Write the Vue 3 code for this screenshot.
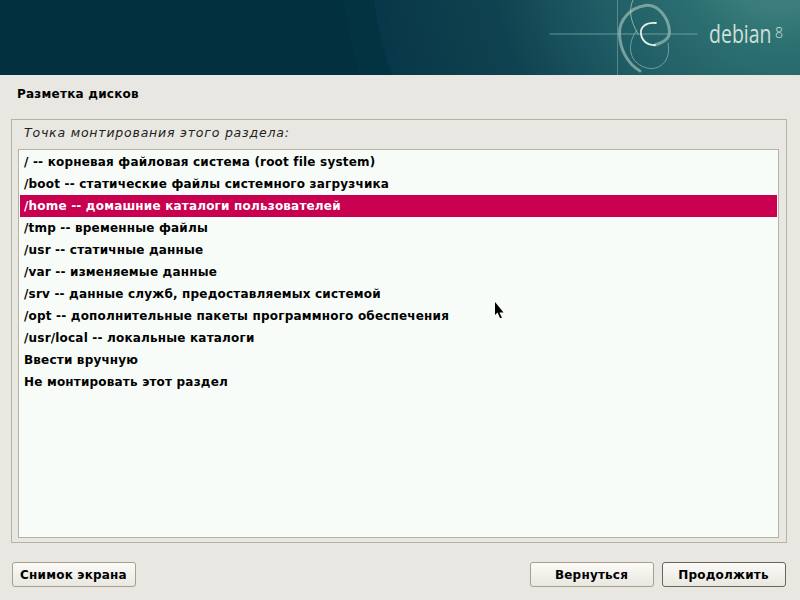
<script setup>
const rows = [
  '/ -- корневая файловая система (root file system)',
  '/boot -- статические файлы системного загрузчика',
  '/home -- домашние каталоги пользователей',
  '/tmp -- временные файлы',
  '/usr -- статичные данные',
  '/var -- изменяемые данные',
  '/srv -- данные служб, предоставляемых системой',
  '/opt -- дополнительные пакеты программного обеспечения',
  '/usr/local -- локальные каталоги',
  'Ввести вручную',
  'Не монтировать этот раздел',
]
const selected = 2
</script>

<template>
  <div class="page">
    <header class="banner">
      <svg class="art" width="800" height="75" viewBox="0 0 800 75">
        <defs>
          <radialGradient id="glow" gradientUnits="userSpaceOnUse" cx="780" cy="-56" r="410">
            <stop offset="0.160" stop-color="#3b7d7c" />
            <stop offset="0.250" stop-color="#2c7071" />
            <stop offset="0.490" stop-color="#1e5a63" />
            <stop offset="0.710" stop-color="#0f4250" />
            <stop offset="0.940" stop-color="#0a3a49" />
            <stop offset="1" stop-color="#08364a" />
          </radialGradient>
        </defs>
        <rect width="800" height="75" fill="#02303f" />
        <circle cx="780" cy="-56" r="440" fill="#033240" />
        <circle cx="780" cy="-56" r="410" fill="url(#glow)" />
        <g fill="none" stroke-linecap="round">
          <path d="M550 34H697" stroke="#9fc2ba" stroke-opacity=".6" />
          <path d="M617.500 0V75" stroke="#8fb5ae" stroke-opacity=".5" />
          <path d="M640 71C628 64 620 50 619.500 34C619 20 630 8 645 5.500C658 3.500 669 18 669.500 32C669.500 40 662 43 655 45" stroke="#8db2ae" stroke-width="3" stroke-opacity=".8" />
          <path d="M633 0C628 10 631 22 638 34" stroke="#b7d0ca" stroke-opacity=".7" />
          <path d="M637 30C629 40 628 54 636 62C645 70 658 72 666 60C669 54 669 48 668 43" stroke="#a8c6c0" stroke-opacity=".6" />
          <path d="M655 45C648 46 642 41 641 34C640 27 646 22 656 23" stroke="#e6efe9" stroke-width="1.800" />
        </g>
      </svg>
      <span class="brand">debian</span>
      <span class="version">8</span>
    </header>
    <h1 class="title">Разметка дисков</h1>
    <section class="panel">
      <p class="prompt">Точка монтирования этого раздела:</p>
      <ul class="list">
        <li v-for="(r, i) in rows" :key="r" class="row" :class="{ active: i === selected }">{{ r }}</li>
      </ul>
    </section>
    <footer class="actions">
      <button class="btn shot">Снимок экрана</button>
      <span class="spacer"></span>
      <button class="btn back">Вернуться</button>
      <button class="btn next">Продолжить</button>
    </footer>
    <svg class="cursor" width="12" height="18" viewBox="0 0 12 18">
      <path d="M1 0V13L3.500 10.500 6 16H8L5.500 10.500H9.500Z" fill="#000" />
    </svg>
  </div>
</template>

<style scoped>
.page {
  position: relative;
  width: 800px;
  height: 600px;
  overflow: hidden;
  background: #e8e7e1;
  font-family: "DejaVu Sans", sans-serif;
  font-size: 12px;
  color: #000;
  display: flex;
  flex-direction: column;
}
.banner {
  position: relative;
  height: 75px;
  flex: none;
}
.art {
  display: block;
}
.brand {
  position: absolute;
  left: 709px;
  top: 15px;
  font-family: "Open Sans", sans-serif;
  font-size: 26px;
  font-weight: 500;
  line-height: 36px;
  color: #cfe0da;
  transform: scaleX(.75);
  transform-origin: left;
}
.version {
  position: absolute;
  left: 775px;
  top: 24px;
  font-family: "Open Sans", sans-serif;
  font-size: 14px;
  line-height: 18px;
  font-weight: 300;
  color: #cfe0da;
}
.title {
  margin: 12px 0 0 17px;
  height: 32px;
  font-size: 12px;
  line-height: 15px;
  font-weight: 700;
  letter-spacing: .23px;
}
.panel {
  margin: 0 13px 0 11px;
  height: 424px;
  box-sizing: border-box;
  border: 1px solid #b8b2a2;
  padding: 0 7px 4px 6px;
  display: flex;
  flex-direction: column;
}
.prompt {
  margin: 0;
  padding: 5px 0 0 6px;
  height: 29px;
  box-sizing: border-box;
  font-style: italic;
  font-size: 12.500px;
  line-height: 16px;
  letter-spacing: .8px;
  color: #222;
}
.list {
  list-style: none;
  margin: 0;
  padding: 1px;
  flex: 1;
  border: 1px solid #b8b2a2;
  background: #f7fcf8;
}
.row {
  height: 22px;
  line-height: 22px;
  padding-left: 4px;
  font-weight: 700;
  letter-spacing: .19px;
  white-space: nowrap;
}
.row.active {
  background: #c8004f;
  color: #fff;
}
.actions {
  display: flex;
  gap: 8px;
  margin: 19px 14px 0 12px;
}
.spacer {
  flex: 1;
}
.btn {
  height: 25px;
  padding: 0 1px 0 0;
  border: 1px solid #a89f8c;
  border-radius: 3px;
  background: linear-gradient(#fbfaf7, #e9e7e0);
  font-family: inherit;
  font-size: 12px;
  font-weight: 700;
  letter-spacing: .2px;
  color: #000;
}
.shot, .back, .next {
  width: 124px;
}
.next {
  border-color: #6b6558;
}
.cursor {
  position: absolute;
  left: 494px;
  top: 302px;
}
</style>
